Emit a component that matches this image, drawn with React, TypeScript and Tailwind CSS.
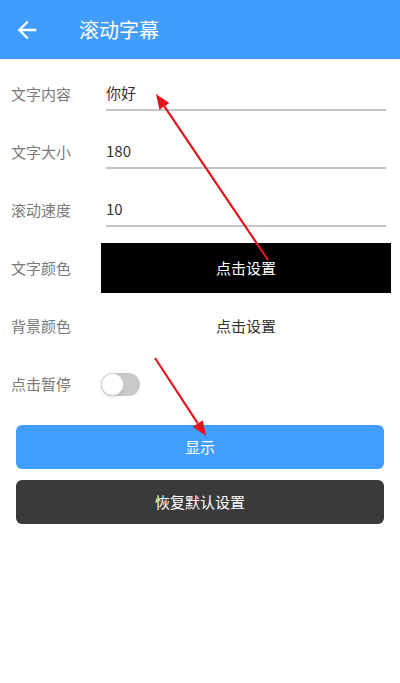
import { useState } from "react";

const font = { fontFamily: '"Noto Sans CJK SC", "Noto Sans", sans-serif' };

const FieldRow = ({ label, value }: { label: string; value: string }) => (
  <div className="flex items-center h-[58px]">
    <span className="w-[90px] shrink-0 text-[15px] text-[#7a7a7a]">{label}</span>
    <div className="flex-1 pl-[5px] pr-[5px]">
      <div className="h-[34px] flex items-center border-b-2 border-[#c4c4c4] text-[15px] text-[#333]">
        {value}
      </div>
    </div>
  </div>
);

// 标注用的红色箭头
const Arrow = ({ x1, y1, x2, y2 }: { x1: number; y1: number; x2: number; y2: number }) => {
  const a = Math.atan2(y2 - y1, x2 - x1);
  const len = 15;
  const w = 6;
  const bx = x2 - len * Math.cos(a);
  const by = y2 - len * Math.sin(a);
  const px = -Math.sin(a) * w;
  const py = Math.cos(a) * w;
  return (
    <g>
      <line x1={x1} y1={y1} x2={bx} y2={by} stroke="#e0161c" strokeWidth={2.2} />
      <polygon points={`${x2},${y2} ${bx + px},${by + py} ${bx - px},${by - py}`} fill="#e0161c" />
    </g>
  );
};

export default function App() {
  const [paused, setPaused] = useState(false);

  return (
    <div className="relative w-[400px] h-[683px] bg-white overflow-hidden" style={font}>
      <header className="h-[59px] bg-[#409cfd] flex items-center pl-[13px]">
        <svg viewBox="0 0 24 24" className="w-[28px] h-[28px]" fill="#fff">
          <path d="M20 11H7.83l5.59-5.59L12 4l-8 8 8 8 1.41-1.41L7.83 13H20v-2z" />
        </svg>
        <h1 className="ml-[38px] text-[20px] text-white font-normal">滚动字幕</h1>
      </header>

      <main className="pt-[6px] pl-[11px] pr-[9px]">
        <FieldRow label="文字内容" value="你好" />
        <FieldRow label="文字大小" value="180" />
        <FieldRow label="滚动速度" value="10" />

        <div className="flex items-center h-[58px]">
          <span className="w-[90px] shrink-0 text-[15px] text-[#7a7a7a]">文字颜色</span>
          <button className="flex-1 h-[50px] bg-black text-white text-[15px] flex items-center justify-center">
            点击设置
          </button>
        </div>

        <div className="flex items-center h-[58px]">
          <span className="w-[90px] shrink-0 text-[15px] text-[#7a7a7a]">背景颜色</span>
          <button className="flex-1 h-[50px] text-[#333] text-[15px] flex items-center justify-center">
            点击设置
          </button>
        </div>

        <div className="flex items-center h-[58px]">
          <span className="w-[90px] shrink-0 text-[15px] text-[#7a7a7a]">点击暂停</span>
          <button
            onClick={() => setPaused(!paused)}
            className="relative w-[39px] h-[23px] rounded-full bg-[#c9c9c9]"
          >
            <span className="absolute left-0 top-0 w-[23px] h-[23px] rounded-full bg-white border border-[#d6d6d6] shadow-sm" />
          </button>
        </div>
      </main>

      <div className="mt-[12px] px-[16px] flex flex-col gap-[11px]">
        <button className="h-[44px] rounded-[6px] bg-[#409eff] text-white text-[15px]">显示</button>
        <button className="h-[44px] rounded-[6px] bg-[#3a3a3a] text-white text-[15px]">恢复默认设置</button>
      </div>

      <svg className="absolute inset-0 pointer-events-none" width="400" height="683">
        <Arrow x1={268} y1={260} x2={156} y2={94} />
        <Arrow x1={155} y1={358} x2={206} y2={436} />
      </svg>
    </div>
  );
}
